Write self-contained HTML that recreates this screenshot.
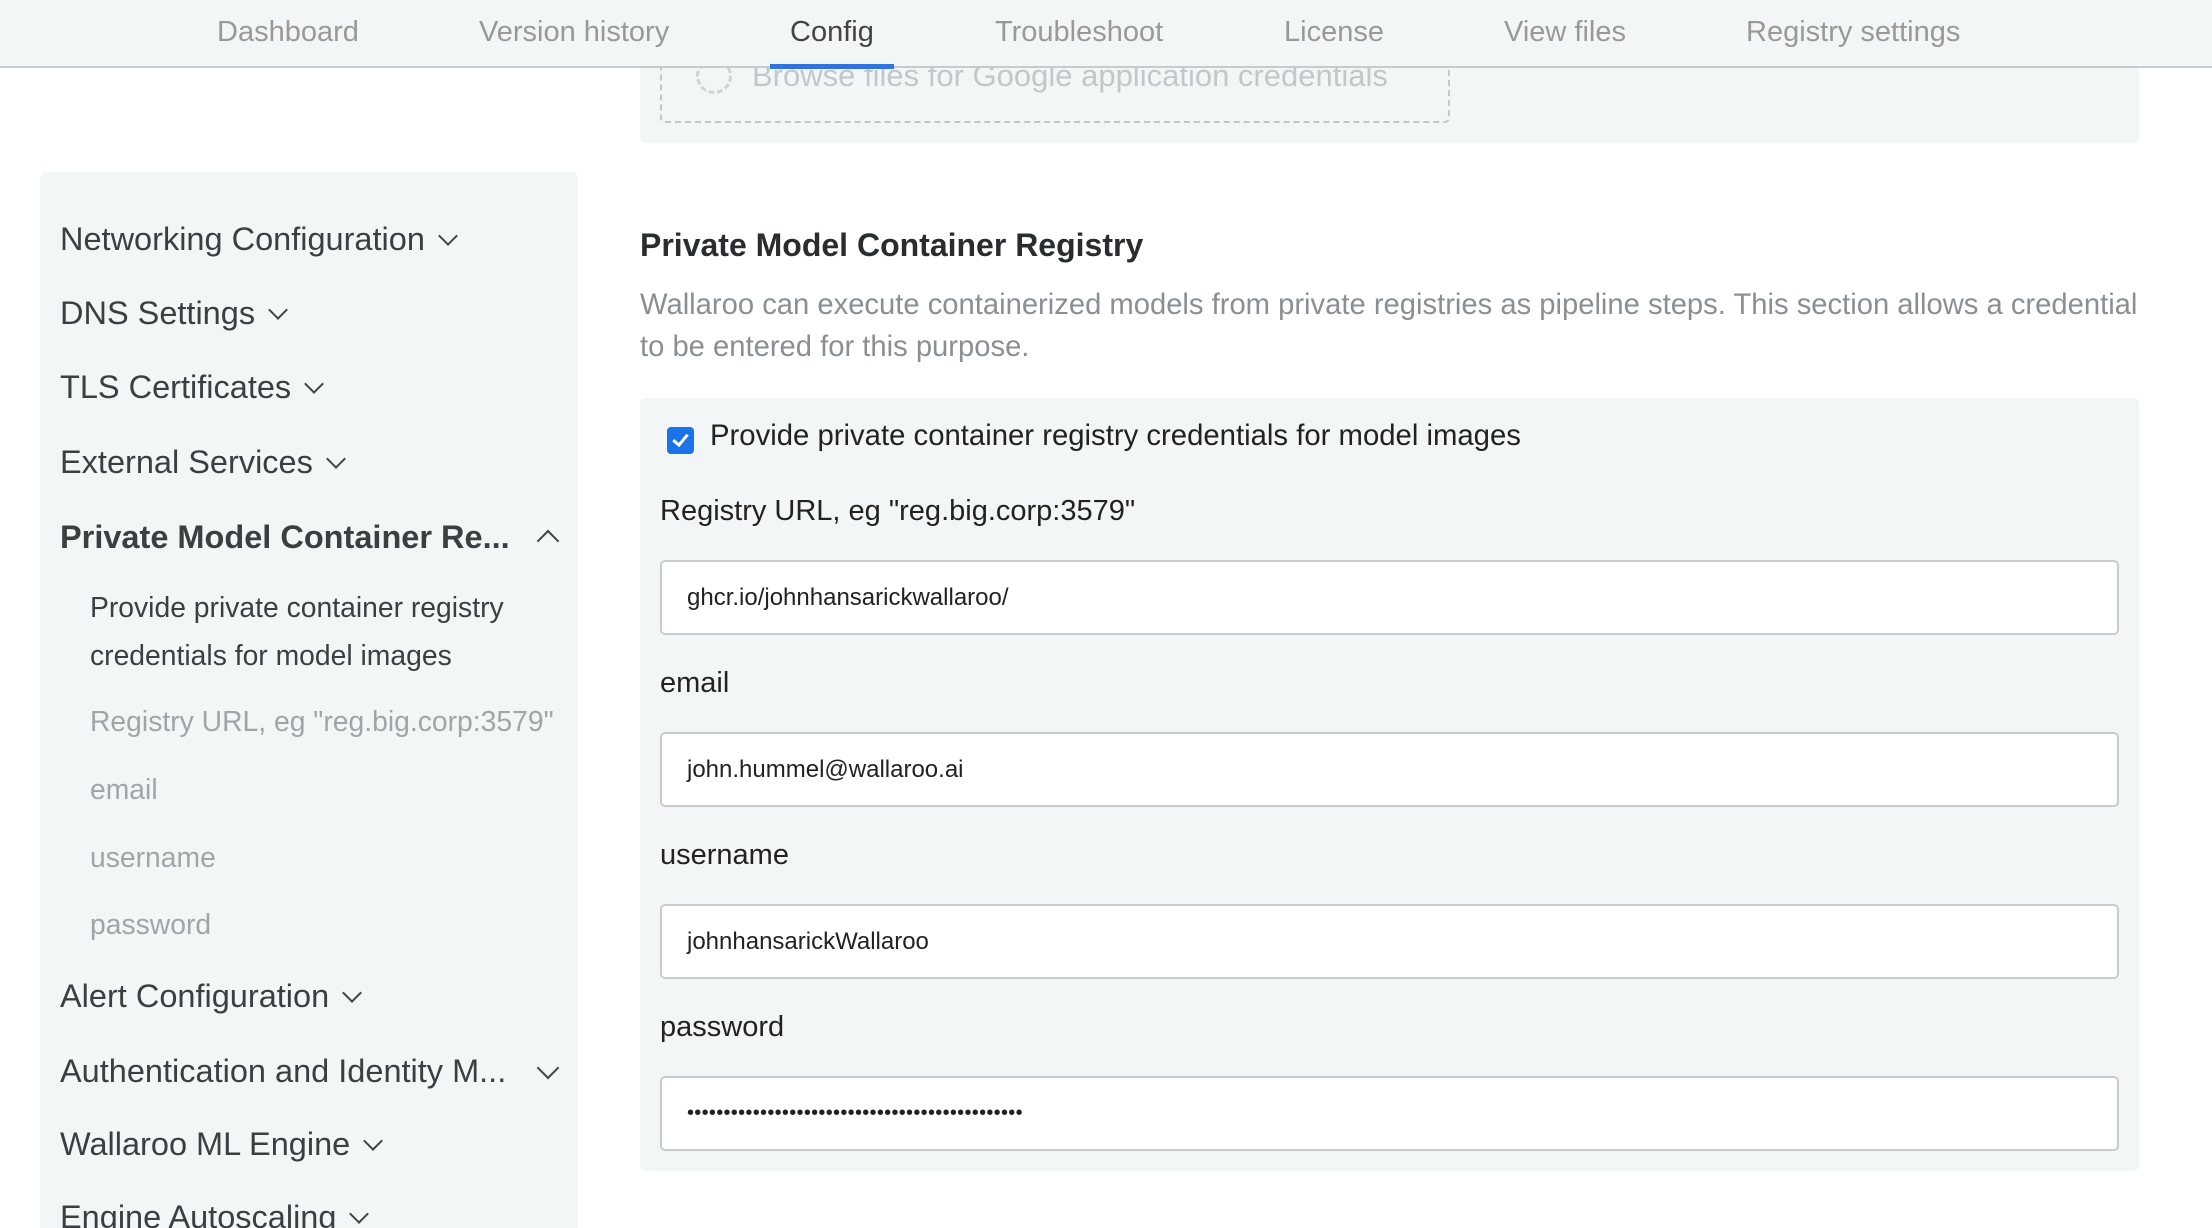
<!DOCTYPE html>
<html><head><meta charset="utf-8"><style>
*{box-sizing:border-box;margin:0;padding:0}
html,body{width:2212px;height:1228px;overflow:hidden}
body{background:#fff;font-family:"Liberation Sans",Helvetica,Arial,sans-serif;position:relative;color:#333}
.abs{position:absolute;white-space:nowrap}
.nav{position:absolute;left:0;top:0;width:2212px;height:68px;background:#f3f6f7;border-bottom:2px solid #c8cbcd;z-index:5}
.tab{position:absolute;top:16px;font-size:29px;color:#999}
.side{position:absolute;left:40px;top:172px;width:538px;height:1056px;background:#f3f6f7;border-radius:6px 6px 0 0}
.si{position:absolute;left:60px;font-size:32.5px;color:#3b3f42;line-height:36px;white-space:nowrap}
.sub{position:absolute;left:90px;font-size:28.3px;color:#a2a5a8;white-space:nowrap}
.chev{display:inline-block;width:14px;height:14px;border-right:2.5px solid #444;border-bottom:2.5px solid #444;transform:rotate(45deg);margin-left:16px;position:relative;top:-7px}
.card{position:absolute;background:#f3f6f7;border-radius:6px}
.lbl{position:absolute;left:660px;font-size:29px;color:#222}
.inp{position:absolute;left:660px;width:1459px;height:75px;background:#fff;border:2px solid #c9ccce;border-radius:5px;font-size:24px;color:#222;padding:22px 0 0 25px}
</style></head><body>
<div class="nav">
<div class="tab" style="left:217px">Dashboard</div>
<div class="tab" style="left:479px">Version history</div>
<div class="tab" style="left:790px;color:#444">Config</div>
<div class="tab" style="left:995px">Troubleshoot</div>
<div class="tab" style="left:1284px">License</div>
<div class="tab" style="left:1504px">View files</div>
<div class="tab" style="left:1746px">Registry settings</div>
<div style="position:absolute;left:770px;top:64px;width:124px;height:5px;background:#2f73e0"></div>
</div>
<div class="card" style="left:640px;top:60px;width:1499px;height:83px;border-radius:0 0 6px 6px"></div>
<div style="position:absolute;left:660px;top:60px;width:790px;height:63px;border:2px dashed #c4c7c9;border-top:none;border-radius:0 0 5px 5px"></div>
<div style="position:absolute;left:696px;top:58px;width:36px;height:36px;border:3px dashed #d0d3d5;border-radius:50%"></div>
<div class="abs" style="left:752px;top:58px;font-size:31px;color:#c4c7c9">Browse files for Google application credentials</div>

<div class="side"></div>
<div class="si" style="top:221px">Networking Configuration<span class="chev"></span></div>
<div class="si" style="top:295px">DNS Settings<span class="chev"></span></div>
<div class="si" style="top:369px">TLS Certificates<span class="chev"></span></div>
<div class="si" style="top:444px">External Services<span class="chev"></span></div>
<div class="si" style="top:519px;font-weight:bold">Private Model Container Re...</div>
<div style="position:absolute;left:540px;top:533px;width:16px;height:16px;border-left:2.5px solid #444;border-top:2.5px solid #444;transform:rotate(45deg)"></div>
<div class="sub" style="top:583px;color:#3b3f42;line-height:48px">Provide private container registry<br>credentials for model images</div>
<div class="sub" style="top:705px">Registry URL, eg "reg.big.corp:3579"</div>
<div class="sub" style="top:773px">email</div>
<div class="sub" style="top:841px">username</div>
<div class="sub" style="top:908px">password</div>
<div class="si" style="top:978px">Alert Configuration<span class="chev"></span></div>
<div class="si" style="top:1053px">Authentication and Identity M...</div>
<div style="position:absolute;left:540px;top:1060px;width:16px;height:16px;border-right:2.5px solid #444;border-bottom:2.5px solid #444;transform:rotate(45deg)"></div>
<div class="si" style="top:1126px">Wallaroo ML Engine<span class="chev"></span></div>
<div class="si" style="top:1199px">Engine Autoscaling<span class="chev"></span></div>

<div class="abs" style="left:640px;top:227px;font-size:32px;font-weight:bold;color:#2a2d30">Private Model Container Registry</div>
<div class="abs" style="left:640px;top:284px;font-size:29.2px;color:#8a8f93;line-height:42px">Wallaroo can execute containerized models from private registries as pipeline steps. This section allows a credential<br>to be entered for this purpose.</div>

<div class="card" style="left:640px;top:398px;width:1499px;height:773px"></div>
<div style="position:absolute;left:667px;top:427px;width:27px;height:27px;background:#1a73e8;border-radius:4px"></div>
<div style="position:absolute;left:676px;top:431px;width:9px;height:15px;border-right:3px solid #fff;border-bottom:3px solid #fff;transform:rotate(40deg)"></div>
<div class="abs" style="left:710px;top:419px;font-size:29.3px;color:#222">Provide private container registry credentials for model images</div>
<div class="lbl" style="top:495px">Registry URL, eg "reg.big.corp:3579"</div>
<div class="inp" style="top:560px">ghcr.io/johnhansarickwallaroo/</div>
<div class="lbl" style="top:667px">email</div>
<div class="inp" style="top:732px">john.hummel@wallaroo.ai</div>
<div class="lbl" style="top:839px">username</div>
<div class="inp" style="top:904px">johnhansarickWallaroo</div>
<div class="lbl" style="top:1011px">password</div>
<div class="inp" style="top:1076px;font-size:20px;letter-spacing:0.3px;padding-top:24px">••••••••••••••••••••••••••••••••••••••••••••••</div>
</body></html>
